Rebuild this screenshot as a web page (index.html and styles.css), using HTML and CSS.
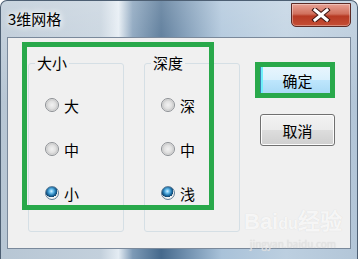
FILE: index.html
```html
<!DOCTYPE html>
<html lang="zh-CN">
<head>
  <meta charset="UTF-8" />
  <meta name="viewport" content="width=device-width" />
  <title>3维网格</title>
  <link rel="stylesheet" href="styles.css">
</head>
<body>
  <div class="window">
    <div class="titlebar">
      <span class="title">3维网格</span>
      <button class="close" title="关闭">
        <svg width="20" height="14" viewBox="0 0 20 14">
          <path d="M4 2 L16 12 M16 2 L4 12" stroke="#3b1512" stroke-width="5" stroke-linecap="square" />
          <path d="M4 2 L16 12 M16 2 L4 12" stroke="#ffffff" stroke-width="3" stroke-linecap="square" />
        </svg>
      </button>
    </div>

    <div class="client">
      <div class="groups">
        <fieldset class="group">
          <legend>大小</legend>
          <label class="radio"><span class="dot"></span>大</label>
          <label class="radio"><span class="dot"></span>中</label>
          <label class="radio"><span class="dot checked"></span>小</label>
        </fieldset>
        <fieldset class="group">
          <legend>深度</legend>
          <label class="radio"><span class="dot"></span>深</label>
          <label class="radio"><span class="dot"></span>中</label>
          <label class="radio"><span class="dot checked"></span>浅</label>
        </fieldset>
      </div>

      <div class="buttons">
        <button class="btn default">确定</button>
        <button class="btn">取消</button>
      </div>

      <!-- green marks drawn over the dialog -->
      <div class="mark mark-groups"></div>
      <div class="mark mark-ok"></div>

      <div class="watermark">
        <div class="wm-logo">Bai<span class="paw">du</span>经验</div>
        <div class="wm-url">jingyan.baidu.com</div>
      </div>
    </div>
  </div>
</body>
</html>
```

FILE: styles.css
```css
body {
  margin: 0;
  background: #ffffff;
  font-family: "Noto Sans CJK SC", "Liberation Sans", sans-serif;
  font-size: 15px;
  color: #000;
}

.window {
  width: 358px;
  height: 259px;
  box-sizing: border-box;
  border: 1px solid #4d5f73;
  border-bottom: none;
  border-radius: 7px 7px 0 0;
  background:
    linear-gradient(180deg, rgba(255,255,255,0.25) 0%, rgba(255,255,255,0) 40%),
    linear-gradient(90deg, #b7c6d4 0%, #c3d0dc 28%, #e4ecf3 33%, #7d9ab6 37%, #45698c 45%, #6f8fae 52%, #a9c2d9 62%, #bccfe0 80%, #b3c6d8 100%);
  display: flex;
  flex-direction: column;
}

.titlebar {
  height: 36px;
  display: flex;
  align-items: flex-start;
  justify-content: space-between;
}

.title {
  margin: 8px 0 0 7px;
  line-height: 20px;
  text-shadow: 0 0 6px #fff, 0 0 8px #fff;
}

.close {
  margin: 2px 6px 0 0;
  width: 60px;
  height: 24px;
  border: 1px solid #5c2a25;
  border-radius: 0 0 5px 5px;
  background: linear-gradient(180deg, #e8a194 0%, #d0705d 45%, #b73a24 55%, #c44e35 100%);
  box-shadow: inset 0 0 0 1px rgba(255,255,255,0.35);
  display: flex;
  align-items: center;
  justify-content: center;
  padding: 0;
}

.client {
  position: relative;
  margin-left: 6px;
  width: 344px;
  height: 212px;
  box-sizing: border-box;
  border: 1px solid #7a899b;
  background: #f0f0f0;
  display: flex;
}

.groups {
  display: flex;
  gap: 20px;
  margin: 17px 0 0 20px;
}

.group {
  box-sizing: border-box;
  width: 96px;
  height: 177px;
  margin: 0;
  padding: 24px 6px 0 6px;
  border: 1px solid #d5dfe5;
  border-radius: 3px;
  display: flex;
  flex-direction: column;
  gap: 24px;
}

.group legend {
  padding: 0 2px;
  line-height: 16px;
}

.radio {
  display: flex;
  align-items: center;
  gap: 5px;
  height: 20px;
  margin-left: 10px;
}

.dot {
  width: 14px;
  height: 14px;
  box-sizing: border-box;
  border-radius: 50%;
  border: 1px solid #8c8f94;
  background: radial-gradient(circle at 50% 50%, #f2f2f2 0%, #e0e0e0 45%, #cfcfcf 60%, #f6f6f6 80%);
}

.dot.checked {
  background:
    radial-gradient(circle at 45% 35%, #d8f1ff 0%, #6fc3f0 18%, #1d70a8 42%, #0f3f66 58%, transparent 60%),
    radial-gradient(circle, #f4f4f4 65%, #d8d8d8 80%);
  border-color: #5f7d96;
}

.buttons {
  display: flex;
  flex-direction: column;
  gap: 18px;
  margin: 26px 0 0 20px;
}

.btn {
  width: 75px;
  height: 32px;
  font-family: inherit;
  font-size: 15px;
  border: 1px solid #707070;
  border-radius: 3px;
  background: linear-gradient(180deg, #f2f2f2 0%, #ebebeb 50%, #dddddd 51%, #cfcfcf 100%);
  box-shadow: inset 0 0 0 1px #fcfcfc;
  padding: 0;
}

.btn.default {
  border-color: #3c7fb1;
  background: linear-gradient(180deg, #eaf6fd 0%, #d9f0fc 50%, #bee6fd 51%, #a7d9f5 100%);
  box-shadow: inset 0 0 0 2px #6ff0fa;
}

.mark {
  position: absolute;
  box-sizing: border-box;
  border: 5px solid #28a84a;
}

.mark-groups {
  left: 14px;
  top: 4px;
  width: 192px;
  height: 168px;
}

.mark-ok {
  left: 247px;
  top: 24px;
  width: 80px;
  height: 36px;
}

.watermark {
  position: absolute;
  left: 236px;
  top: 170px;
  color: rgba(255,255,255,0.8);
  text-shadow: 0 0 1px #d4d4d4;
  text-align: center;
}

.wm-logo {
  font-family: "Liberation Sans", sans-serif;
  font-weight: bold;
  font-size: 22px;
  line-height: 28px;
}

.paw {
  font-size: 16px;
}

.wm-url {
  font-size: 10px;
  line-height: 12px;
  color: rgba(230,230,230,0.85);
}
```
